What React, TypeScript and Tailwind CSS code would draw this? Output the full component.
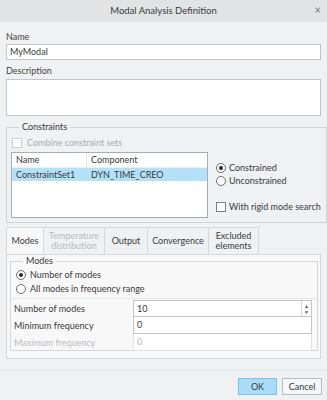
import React from "react";

const Radio = ({ checked }: { checked?: boolean }) => (
  <span className="w-[10px] h-[10px] rounded-full border border-[#6d7073] bg-white flex items-center justify-center shrink-0">
    {checked && <span className="w-[4px] h-[4px] rounded-full bg-[#2a2a2a]" />}
  </span>
);

const Check = ({ disabled }: { disabled?: boolean }) => (
  <span
    className={
      "w-[10px] h-[10px] border bg-white shrink-0 " +
      (disabled ? "border-[#cfd2d4]" : "border-[#7c7f82]")
    }
  />
);

const tabs = [
  { label: ["Modes"], w: "w-[38px]", active: true },
  { label: ["Temperature", "distribution"], w: "w-[61px]", disabled: true },
  { label: ["Output"], w: "w-[43px]" },
  { label: ["Convergence"], w: "w-[61px]" },
  { label: ["Excluded", "elements"], w: "w-[50px]" },
];

export default function App() {
  return (
    <div className="w-[327px] h-[400px] bg-[#f0f1f2] text-[9px] leading-[12px] text-[#3a3a3a] font-['Lato',sans-serif] whitespace-nowrap flex flex-col overflow-hidden">
      {/* barra de título */}
      <div className="h-[22px] bg-[#e1e3e5] flex items-center justify-center relative shrink-0">
        <span className="text-[9.5px]">Modal Analysis Definition</span>
        <span className="absolute right-[6px] top-[4px] text-[11px] text-[#777]">×</span>
      </div>

      <div className="px-[6px] flex flex-col">
        <div className="mt-[9px] h-[12px] text-[#444]">Name</div>
        <div className="mt-[1px] h-[16px] bg-white border border-[#c3c6c9] flex items-center px-[3px]">MyModal</div>
        <div className="mt-[5px] h-[12px] text-[#444]">Description</div>
        <div className="mt-[2px] h-[37px] bg-white border border-[#c3c6c9]" />

        {/* Constraints */}
        <fieldset className="mt-[5px] h-[102px] border border-[#d3d6d8] px-[5px] pb-[4px]">
          <legend className="ml-[7px] px-[3px] leading-[12px]">Constraints</legend>
          <div className="mt-[4px] h-[12px] flex items-center gap-[5px] text-[#a9acaf]">
            <Check disabled />
            <span>Combine constraint sets</span>
          </div>
          <div className="mt-[3px] flex">
            <div className="-ml-[1px] w-[197px] h-[66px] bg-white border border-[#a9adb0] flex flex-col">
              <div className="h-[15px] flex items-center border-b border-[#eceef0]">
                <span className="w-[75px] pl-[4px] border-r border-[#e2e4e6] h-full flex items-center">Name</span>
                <span className="pl-[4px]">Component</span>
              </div>
              <div className="h-[13px] bg-[#b4e1f8] flex items-center">
                <span className="w-[75px] pl-[4px]">ConstraintSet1</span>
                <span className="pl-[4px]">DYN_TIME_CREO</span>
              </div>
            </div>
            <div className="ml-[8px] flex flex-col">
              <div className="mt-[9px] h-[13px] flex items-center gap-[3px]">
                <Radio checked />
                <span>Constrained</span>
              </div>
              <div className="h-[13px] flex items-center gap-[3px]">
                <Radio />
                <span>Unconstrained</span>
              </div>
              <div className="mt-[13px] h-[13px] flex items-center gap-[3px]">
                <Check />
                <span>With rigid mode search</span>
              </div>
            </div>
          </div>
        </fieldset>

        {/* pestañas */}
        <div className="mt-[4px] h-[27px] flex">
          {tabs.map((t, i) => (
            <div
              key={i}
              className={
                t.w +
                " h-full flex flex-col items-center justify-center leading-[10px] border-t border-r border-[#d6d9db] " +
                (i === 0 ? "border-l bg-[#f8f8f9] -mb-[1px] h-[28px] relative z-10 " : "bg-[#f0f1f2] ") +
                (t.disabled ? "text-[#b8bbbe]" : "text-[#3a3a3a]")
              }
            >
              {t.label.map((l) => (
                <span key={l}>{l}</span>
              ))}
            </div>
          ))}
        </div>
        <div className="h-[105px] bg-[#f8f8f9] border border-[#d6d9db] px-[3px]">
          <fieldset className="h-[96px] border border-[#d6d9db] px-[5px]">
            <legend className="ml-[7px] px-[3px] leading-[12px]">Modes</legend>
            <div className="mt-[1px] h-[14px] flex items-center gap-[4px]">
              <Radio checked />
              <span>Number of modes</span>
            </div>
            <div className="h-[14px] flex items-center gap-[4px]">
              <Radio />
              <span>All modes in frequency range</span>
            </div>
            <div className="-mx-[5px] mt-[2px] border-t border-[#e6e8ea]" />
            <div className="mt-[1px] -ml-[2px] grid grid-cols-[119px_179px] grid-rows-[17px_17px_17px]">
              <div className="flex items-center">Number of modes</div>
              <div className="bg-white border border-[#c3c6c9] flex items-center justify-between pl-[3px]">
                <span>10</span>
                <span className="w-[10px] h-full border-l border-[#d6d9db] flex flex-col items-center justify-center text-[5px] leading-[6px] text-[#555]">
                  <span>▲</span>
                  <span>▼</span>
                </span>
              </div>
              <div className="flex items-center">Minimum frequency</div>
              <div className="bg-white border border-[#c3c6c9] border-t-0 flex items-center pl-[3px]">0</div>
              <div className="flex items-center text-[#b8bbbe]">Maximum frequency</div>
              <div className="bg-white border border-[#e0e2e4] border-t-0 flex items-center pl-[3px] text-[#b8bbbe]">0</div>
            </div>
          </fieldset>
        </div>
      </div>

      {/* pie con botones */}
      <div className="mt-[11px] border-t border-[#e2e4e6] flex-1 flex justify-end items-start gap-[5px] pr-[5px] pt-[7px]">
        <button className="w-[39px] h-[17px] bg-[#a9dcf8] border border-[#78c4ee]">OK</button>
        <button className="w-[40px] h-[17px] bg-[#f6f7f8] border border-[#b9bcbf]">Cancel</button>
      </div>
    </div>
  );
}
